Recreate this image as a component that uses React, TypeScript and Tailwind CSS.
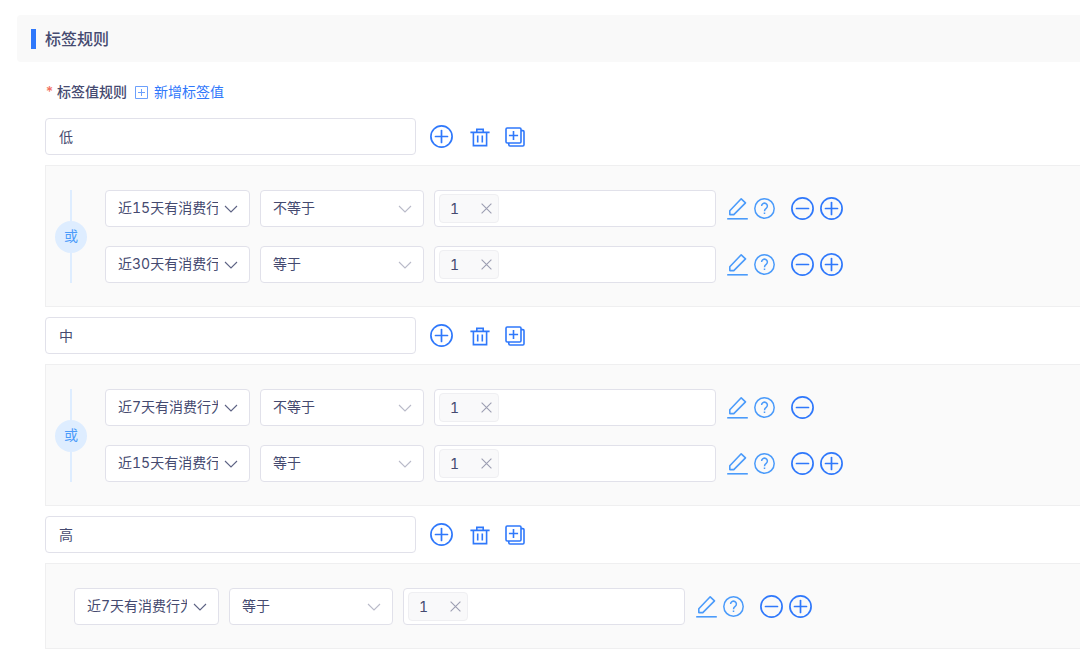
import { useState } from 'react';
import type { ReactNode } from 'react';

type Condicao = {
  campo: string;
  operador: string;
  valor: string;
  removivel: boolean;
  adicionavel: boolean;
};

type Regra = {
  nome: string;
  condicoes: Condicao[];
};

const CAMPOS = ['近7天有消费行为', '近15天有消费行为', '近30天有消费行为'];
const OPERADORES = ['等于', '不等于'];

const REGRAS: Regra[] = [
  {
    nome: '低',
    condicoes: [
      { campo: '近15天有消费行为', operador: '不等于', valor: '1', removivel: true, adicionavel: true },
      { campo: '近30天有消费行为', operador: '等于', valor: '1', removivel: true, adicionavel: true },
    ],
  },
  {
    nome: '中',
    condicoes: [
      { campo: '近7天有消费行为', operador: '不等于', valor: '1', removivel: true, adicionavel: false },
      { campo: '近15天有消费行为', operador: '等于', valor: '1', removivel: true, adicionavel: true },
    ],
  },
  {
    nome: '高',
    condicoes: [
      { campo: '近7天有消费行为', operador: '等于', valor: '1', removivel: true, adicionavel: true },
    ],
  },
];

function CircleIcon({ plus = false }: { plus?: boolean }) {
  return (
    <svg width="23" height="23" viewBox="0 0 23 23" fill="none" stroke="currentColor" strokeWidth="1.7" strokeLinecap="round">
      <circle cx="11.5" cy="11.5" r="10.6" />
      <path d="M5.5 11.5h12" />
      {plus && <path d="M11.5 5.5v12" />}
    </svg>
  );
}

function TrashIcon() {
  return (
    <svg width="20" height="20" viewBox="0 0 20 20" fill="none" stroke="currentColor" strokeWidth="1.6">
      <path d="M0.4 5.4h19.2M6.8 5.4V2.4h6.4v3M3.4 5.4v13.2h13.2V5.4M7.7 8.6v7M12.3 8.6v7" />
    </svg>
  );
}

function CopyIcon() {
  return (
    <svg width="20" height="20" viewBox="0 0 20 20" fill="none" stroke="currentColor" strokeWidth="1.6">
      <rect x="1" y="1" width="15" height="15" rx="1.2" />
      <path d="M16 3.6h1.8a1.2 1.2 0 0 1 1.2 1.2v13a1.2 1.2 0 0 1-1.2 1.2H5a1.2 1.2 0 0 1-1.2-1.2V16M8.5 3.9v9.2M3.9 8.5h9.2" />
    </svg>
  );
}

function EditIcon() {
  return (
    <svg width="21" height="23" viewBox="0 0 21 23" fill="none" stroke="currentColor" strokeWidth="1.6">
      <path d="M2.8 17.6v-3.8L14.2 1.8l4.3 4.1L6.8 17.6z" strokeLinejoin="round" />
      <path d="M0.2 21.8h20.6" />
    </svg>
  );
}

function HelpIcon() {
  return (
    <svg width="21" height="21" viewBox="0 0 21 21" fill="none" stroke="currentColor" strokeWidth="1.5">
      <circle cx="10.5" cy="10.5" r="9.7" />
      <path d="M7.6 8.1a2.9 2.9 0 1 1 4.6 2.3c-1.1.8-1.7 1.3-1.7 2.8M10.5 14.6v1.5" />
    </svg>
  );
}

function ChevronIcon() {
  return (
    <svg width="14" height="8" viewBox="0 0 14 8" fill="none" stroke="currentColor" strokeWidth="1.1">
      <path d="M1 1l6 6 6-6" />
    </svg>
  );
}

function IconButton({ label, children }: { label: string; children: ReactNode }) {
  return (
    <button type="button" aria-label={label} className="shrink-0 cursor-pointer">
      {children}
    </button>
  );
}

function CondicaoRow({ condicao }: { condicao: Condicao }) {
  const [valores, setValores] = useState<string[]>([condicao.valor]);

  return (
    <div className="flex items-center">
      <div className="relative w-[145px] shrink-0">
        <select
          aria-label="标签"
          defaultValue={condicao.campo}
          className="block h-[37px] w-full appearance-none rounded border border-[#e1e1ea] bg-white pr-[31px] pb-[2px] pl-3 text-sm"
        >
          {CAMPOS.map((campo) => (
            <option key={campo}>{campo}</option>
          ))}
        </select>
        <span className="pointer-events-none absolute inset-y-0 right-3 flex items-center text-[#5d6284]">
          <ChevronIcon />
        </span>
      </div>

      <div className="relative ml-[10px] w-[164px] shrink-0">
        <select
          aria-label="条件"
          defaultValue={condicao.operador}
          className="block h-[37px] w-full appearance-none rounded border border-[#e1e1ea] bg-white pr-[31px] pb-[2px] pl-3 text-sm"
        >
          {OPERADORES.map((operador) => (
            <option key={operador}>{operador}</option>
          ))}
        </select>
        <span className="pointer-events-none absolute inset-y-0 right-3 flex items-center text-[#b9bac9]">
          <ChevronIcon />
        </span>
      </div>

      <div className="ml-[10px] flex h-[37px] w-[282px] shrink-0 items-center gap-2 rounded border border-[#e1e1ea] bg-white px-1">
        {valores.map((valor) => (
          <span
            key={valor}
            className="flex h-[29px] w-[60px] shrink-0 items-center justify-between rounded border border-[#efeff2] bg-[#f9f9fa] pr-[6px] pl-[10px] text-sm"
          >
            {valor}
            <button
              type="button"
              aria-label="移除"
              className="cursor-pointer text-[#9c9eb2]"
              onClick={() => setValores(valores.filter((v) => v !== valor))}
            >
              <svg width="11" height="11" viewBox="0 0 11 11" fill="none" stroke="currentColor" strokeWidth="1.1">
                <path d="M0.6 0.6l9.8 9.8M10.4 0.6L0.6 10.4" />
              </svg>
            </button>
          </span>
        ))}
        <input aria-label="值" className="min-w-0 flex-1 bg-transparent text-sm outline-none" />
      </div>

      <div className="ml-[11px] flex items-center gap-[6px] text-[#4b9bfa]">
        <IconButton label="编辑">
          <EditIcon />
        </IconButton>
        <IconButton label="帮助">
          <HelpIcon />
        </IconButton>
      </div>
      <div className="ml-4 flex items-center gap-[6px] text-[#2f78fb]">
        {condicao.removivel && (
          <IconButton label="删除条件">
            <CircleIcon />
          </IconButton>
        )}
        {condicao.adicionavel && (
          <IconButton label="添加条件">
            <CircleIcon plus />
          </IconButton>
        )}
      </div>
    </div>
  );
}

function RegraBlock({ regra, id }: { regra: Regra; id: string }) {
  const agrupada = regra.condicoes.length > 1;

  return (
    <section>
      <div className="flex items-center">
        <input
          id={id}
          aria-label="标签值"
          defaultValue={regra.nome}
          className="h-[37px] w-[371px] rounded border border-[#e1e1ea] bg-white px-[13px] pb-[2px] text-sm"
        />
        <div className="ml-[14px] flex items-center text-[#2f78fb]">
          <IconButton label="添加">
            <CircleIcon plus />
          </IconButton>
          <div className="ml-[17px] flex items-center gap-[15px]">
            <IconButton label="删除">
              <TrashIcon />
            </IconButton>
            <IconButton label="复制">
              <CopyIcon />
            </IconButton>
          </div>
        </div>
      </div>

      <div className="mt-[10px] flex border-y border-l border-[#efeff0] bg-[#fafafa] pt-6 pb-[23px]">
        {agrupada ? (
          <div className="mr-[18px] ml-[9px] flex w-8 shrink-0 flex-col items-center">
            <span className="w-[2px] flex-1 bg-[#deedff]" />
            <span className="flex size-8 items-center justify-center rounded-full bg-[#deedff] pb-[2px] text-sm text-[#4b9bfa]">
              或
            </span>
            <span className="w-[2px] flex-1 bg-[#deedff]" />
          </div>
        ) : (
          <div className="w-7 shrink-0" />
        )}
        <div className="flex flex-col gap-[19px]">
          {regra.condicoes.map((condicao, i) => (
            <CondicaoRow key={i} condicao={condicao} />
          ))}
        </div>
      </div>
    </section>
  );
}

export default function App() {
  return (
    <main className="min-h-screen overflow-hidden bg-white pt-[15px] pb-1 pl-[17px] font-['Inter','Noto_Sans_CJK_SC',sans-serif] text-[#454a70] tabular-nums">
      <header className="flex h-[47px] items-center gap-[9px] rounded-l bg-[#f9f9f9] pl-[14px]">
        <span className="h-5 w-[5px] bg-[#2f78fb]" />
        <h1 className="text-base font-medium">标签规则</h1>
      </header>

      <div className="ml-7">
        <div className="mt-5 mb-4 flex h-5 items-center text-sm">
          <label htmlFor="regra-0" className="flex items-center gap-[5px] font-medium">
            <span className="w-[7px] text-[#f2705f]">*</span>
            标签值规则
          </label>
          <button type="button" className="ml-2 flex cursor-pointer items-center gap-[6px] text-[#2f78fb]">
            <svg width="13" height="13" viewBox="0 0 13 13" fill="none" stroke="currentColor" opacity="0.7">
              <path d="M0.5 0.5h12v12h-12zM6.5 3v7M3 6.5h7" />
            </svg>
            新增标签值
          </button>
        </div>

        <div className="flex flex-col gap-[10px]">
          {REGRAS.map((regra, i) => (
            <RegraBlock key={regra.nome} regra={regra} id={`regra-${i}`} />
          ))}
        </div>
      </div>
    </main>
  );
}
